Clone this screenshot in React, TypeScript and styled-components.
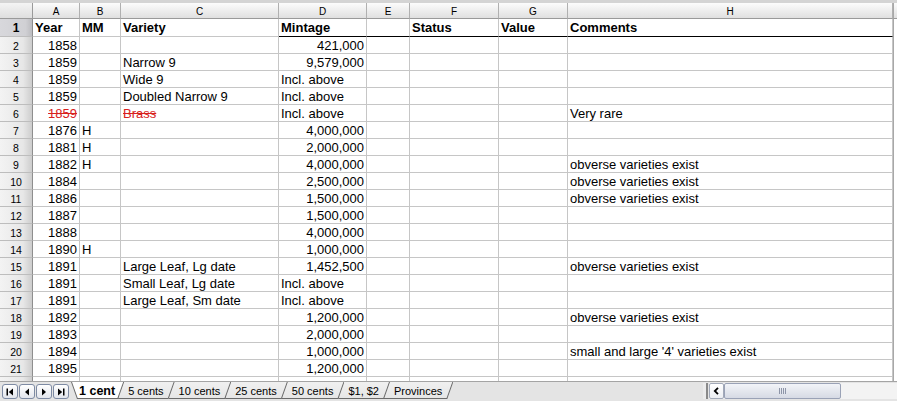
import React from "react";
import styled, { createGlobalStyle } from "styled-components";

const Global = createGlobalStyle`
  html, body { margin: 0; padding: 0; background: #fff; overflow: hidden; }
  body { font-family: "Liberation Sans", Arial, sans-serif; }
`;

const Window = styled.div`
  width: 897px;
  height: 401px;
  display: flex;
  flex-direction: column;
  overflow: hidden;
  background: #fff;
`;

const TopStrip = styled.div`
  flex: none;
  height: 3px;
  background: #d4d4d4;
`;

const SheetArea = styled.div`
  flex: 1;
  min-height: 0;
  overflow: hidden;
`;

const Grid = styled.div`
  display: grid;
  grid-template-columns: 33px 47px 41px 158px 88px 43px 89px 69px 325px 4px;
  grid-template-rows: 16px 18px;
  grid-auto-rows: 17px;
`;

const Corner = styled.div`
  box-sizing: border-box;
  background: linear-gradient(#f4f4f4, #dedede);
  border-right: 1px solid #9a9a9a;
  border-bottom: 1px solid #9a9a9a;
`;

const ColHead = styled.div`
  box-sizing: border-box;
  background: linear-gradient(#fcfcfc, #e0e0e0);
  border-right: 1px solid #b0b0b0;
  border-bottom: 1px solid #9a9a9a;
  font-size: 10px;
  color: #000;
  display: flex;
  align-items: center;
  justify-content: center;
  padding-top: 1px;
`;

const RowHead = styled.div<{ $active?: boolean }>`
  box-sizing: border-box;
  background: ${(p) =>
    p.$active
      ? "linear-gradient(to right, #d8d8dc, #d0d0d4 80%, #bcbcc0)"
      : "linear-gradient(to right, #f3f3f3, #e7e7e7 72%, #cdcdcd)"};
  border-right: 1px solid #8e8e8e;
  border-bottom: 1px solid #bdbdbd;
  font-size: ${(p) => (p.$active ? "12px" : "10.5px")};
  font-weight: ${(p) => (p.$active ? 700 : 400)};
  color: #000;
  display: flex;
  align-items: center;
  justify-content: center;
  padding-top: 1px;
`;

const Cell = styled.div<{
  $right?: boolean;
  $bold?: boolean;
  $strike?: boolean;
  $heavy?: boolean;
}>`
  box-sizing: border-box;
  border-right: 1px solid #c6c6c6;
  border-bottom: 1px solid ${(p) => (p.$heavy ? "#000" : "#c6c6c6")};
  padding: 1px 2px 0 2px;
  font-size: 13px;
  line-height: 15px;
  font-weight: ${(p) => (p.$bold ? 700 : 400)};
  color: ${(p) => (p.$strike ? "#d8201c" : "#000")};
  text-decoration: ${(p) => (p.$strike ? "line-through" : "none")};
  text-align: ${(p) => (p.$right ? "right" : "left")};
  white-space: nowrap;
  overflow: hidden;
`;

const Filler = styled.div<{ $head?: boolean }>`
  box-sizing: border-box;
  border-left: 1px solid #a8a8a8;
  background: ${(p) => (p.$head ? "linear-gradient(#fcfcfc, #e0e0e0)" : "#fff")};
  border-bottom: ${(p) => (p.$head ? "1px solid #9a9a9a" : "none")};
`;

/* ---------- Tab bar ---------- */

const TabBar = styled.div`
  flex: none;
  height: 20px;
  box-sizing: border-box;
  display: flex;
  align-items: flex-start;
  background: #e4e4e4;
  border-top: 1px solid #a4a4a4;
`;

const NavGroup = styled.div`
  flex: none;
  width: 71px;
  box-sizing: border-box;
  display: flex;
  gap: 1px;
  padding: 2px 0 0 2px;
`;

const NavButton = styled.div`
  width: 16px;
  height: 15px;
  box-sizing: border-box;
  border: 1px solid #7d8aa3;
  border-radius: 3px;
  background: linear-gradient(#ffffff, #e2e5ec);
  display: flex;
  align-items: center;
  justify-content: center;
`;

const Tabs = styled.div`
  flex: none;
  display: flex;
  align-items: flex-start;
`;

const TabShape = styled.div<{ $active?: boolean; $z: number }>`
  z-index: ${(p) => p.$z};
  height: 17px;
  box-sizing: border-box;
  padding-bottom: 1px;
  margin-left: ${(p) => (p.$active ? "0" : "-6px")};
  background: #6a6a6a;
  display: flex;
  clip-path: ${(p) =>
    p.$active
      ? "polygon(0 0, 100% 0, calc(100% - 6px) 100%, 6px 100%)"
      : "polygon(0 0, 100% 0, calc(100% - 6px) 100%, 0 100%)"};
`;

const TabFace = styled.div<{ $active?: boolean }>`
  height: 16px;
  box-sizing: border-box;
  background: ${(p) => (p.$active ? "#ffffff" : "linear-gradient(#f0f0f0, #e6e6e6)")};
  clip-path: ${(p) =>
    p.$active
      ? "polygon(1px 0, calc(100% - 1px) 0, calc(100% - 6.7px) 100%, 6.7px 100%)"
      : "polygon(0 0, calc(100% - 1px) 0, calc(100% - 6.7px) 100%, 0 100%)"};
  padding: ${(p) => (p.$active ? "2px 9px 0 8px" : "2px 11px 0 10px")};
  display: flex;
  align-items: center;
  font-size: ${(p) => (p.$active ? "12.5px" : "11px")};
  font-weight: ${(p) => (p.$active ? 700 : 400)};
  color: #000;
  white-space: nowrap;
`;

const Spacer = styled.div`
  flex: 1;
`;

const Splitter = styled.div`
  flex: none;
  width: 5px;
  height: 16px;
  margin: 1px 1px 0 0;
  box-sizing: border-box;
  background: #ececec;
  border-right: 2px solid #8a8a8a;
`;

const ScrollBar = styled.div`
  flex: none;
  width: 188px;
  height: 16px;
  margin-top: 1px;
  display: flex;
  background: #f3f3f3;
`;

const ScrollArrow = styled.div`
  flex: none;
  width: 15px;
  height: 16px;
  box-sizing: border-box;
  border: 1px solid #a2a9b8;
  border-radius: 2px;
  background: linear-gradient(#ffffff, #eceef2);
  display: flex;
  align-items: center;
  justify-content: center;
`;

const Thumb = styled.div`
  flex: none;
  width: 117px;
  height: 16px;
  box-sizing: border-box;
  border: 1px solid #9aa2b6;
  border-radius: 2px;
  background: linear-gradient(#f2f4f8, #d6dae4);
  display: flex;
  align-items: center;
  justify-content: center;
  gap: 1px;
`;

const Grip = styled.span`
  width: 1px;
  height: 6px;
  background: #8d95a8;
`;

/* ---------- data ---------- */

type Row = {
  n: number;
  a?: string;
  b?: string;
  c?: string;
  d?: string;
  h?: string;
  strike?: boolean;
};

const rows: Row[] = [
  { n: 2, a: "1858", d: "421,000" },
  { n: 3, a: "1859", c: "Narrow 9", d: "9,579,000" },
  { n: 4, a: "1859", c: "Wide 9", d: "Incl. above" },
  { n: 5, a: "1859", c: "Doubled Narrow 9", d: "Incl. above" },
  { n: 6, a: "1859", c: "Brass", d: "Incl. above", h: "Very rare", strike: true },
  { n: 7, a: "1876", b: "H", d: "4,000,000" },
  { n: 8, a: "1881", b: "H", d: "2,000,000" },
  { n: 9, a: "1882", b: "H", d: "4,000,000", h: "obverse varieties exist" },
  { n: 10, a: "1884", d: "2,500,000", h: "obverse varieties exist" },
  { n: 11, a: "1886", d: "1,500,000", h: "obverse varieties exist" },
  { n: 12, a: "1887", d: "1,500,000" },
  { n: 13, a: "1888", d: "4,000,000" },
  { n: 14, a: "1890", b: "H", d: "1,000,000" },
  { n: 15, a: "1891", c: "Large Leaf, Lg date", d: "1,452,500", h: "obverse varieties exist" },
  { n: 16, a: "1891", c: "Small Leaf, Lg date", d: "Incl. above" },
  { n: 17, a: "1891", c: "Large Leaf, Sm date", d: "Incl. above" },
  { n: 18, a: "1892", d: "1,200,000", h: "obverse varieties exist" },
  { n: 19, a: "1893", d: "2,000,000" },
  { n: 20, a: "1894", d: "1,000,000", h: "small and large '4' varieties exist" },
  { n: 21, a: "1895", d: "1,200,000" },
  { n: 22, a: "1896", d: "2,000,000", h: "rotated dies (Bird) and doubled dates" },
];

const letters = ["A", "B", "C", "D", "E", "F", "G", "H"];
const headers = ["Year", "MM", "Variety", "Mintage", "", "Status", "Value", "Comments"];
const tabs = ["1 cent", "5 cents", "10 cents", "25 cents", "50 cents", "$1, $2", "Provinces"];

const isNum = (s?: string) => !!s && /^[\d,]+$/.test(s);

const Tri = ({ dir, bar }: { dir: "l" | "r"; bar?: boolean }) => (
  <svg width="8" height="8" viewBox="0 0 8 8">
    {dir === "l" ? (
      <>
        {bar && <rect x="0.5" y="0.5" width="1.5" height="7" fill="#000" />}
        <polygon points={bar ? "7,0.5 7,7.5 2.8,4" : "6,0.5 6,7.5 2,4"} fill="#000" />
      </>
    ) : (
      <>
        <polygon points={bar ? "1,0.5 1,7.5 5.2,4" : "2,0.5 2,7.5 6,4"} fill="#000" />
        {bar && <rect x="6" y="0.5" width="1.5" height="7" fill="#000" />}
      </>
    )}
  </svg>
);

export default function App() {
  return (
    <>
      <Global />
      <Window>
        <TopStrip />
        <SheetArea>
          <Grid>
            <Corner />
            {letters.map((l) => (
              <ColHead key={l}>{l}</ColHead>
            ))}
            <Filler $head />

            <RowHead $active>1</RowHead>
            {headers.map((h, i) => (
              <Cell key={i} $bold $heavy={i >= 3}>
                {h}
              </Cell>
            ))}
            <Filler />

            {rows.map((r) => (
              <React.Fragment key={r.n}>
                <RowHead>{r.n}</RowHead>
                <Cell $right $strike={r.strike}>{r.a}</Cell>
                <Cell>{r.b}</Cell>
                <Cell $strike={r.strike}>{r.c}</Cell>
                <Cell $right={isNum(r.d)}>{r.d}</Cell>
                <Cell />
                <Cell />
                <Cell />
                <Cell>{r.h}</Cell>
                <Filler />
              </React.Fragment>
            ))}
          </Grid>
        </SheetArea>
        <TabBar>
          <NavGroup>
            <NavButton><Tri dir="l" bar /></NavButton>
            <NavButton><Tri dir="l" /></NavButton>
            <NavButton><Tri dir="r" /></NavButton>
            <NavButton><Tri dir="r" bar /></NavButton>
          </NavGroup>
          <Tabs>
            {tabs.map((t, i) => (
              <TabShape key={t} $active={i === 0} $z={i === 0 ? 20 : 10 - i}>
                <TabFace $active={i === 0}>{t}</TabFace>
              </TabShape>
            ))}
          </Tabs>
          <Spacer />
          <Splitter />
          <ScrollBar>
            <ScrollArrow>
              <svg width="7" height="8" viewBox="0 0 7 8">
                <polyline points="5,0.8 1.8,4 5,7.2" fill="none" stroke="#000" strokeWidth="1.8" />
              </svg>
            </ScrollArrow>
            <Thumb>
              <Grip />
              <Grip />
              <Grip />
              <Grip />
            </Thumb>
          </ScrollBar>
        </TabBar>
      </Window>
    </>
  );
}
